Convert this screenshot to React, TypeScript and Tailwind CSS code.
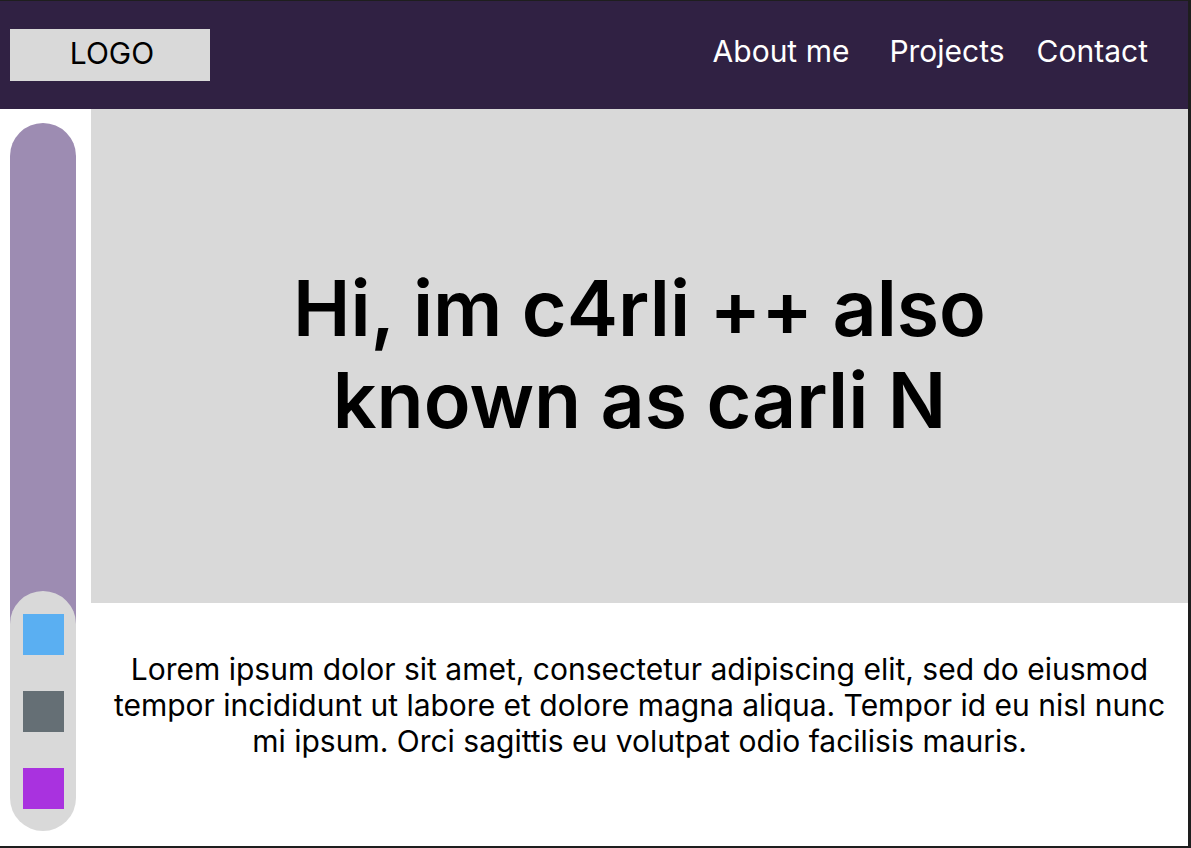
const links = [
  { label: "About me", href: "#about", className: "mr-10" },
  { label: "Projects", href: "#projects", className: "mr-8" },
  { label: "Contact", href: "#contact", className: "" },
];

const swatches = [
  { name: "Blue", className: "bg-[#5aaff2]" },
  { name: "Slate", className: "bg-[#656f75]" },
  { name: "Purple", className: "bg-[#a932df]" },
];

function Header() {
  return (
    <header className="flex h-[108px] items-center justify-between bg-[#302143] pr-10 pl-[10px]">
      <a
        href="#"
        className="flex h-[52px] w-[200px] items-center justify-center bg-[#d9d9d9] pb-1 pl-1 text-black"
      >
        LOGO
      </a>
      <nav className="flex pb-2 text-white">
        {links.map((link) => (
          <a key={link.label} href={link.href} className={link.className}>
            {link.label}
          </a>
        ))}
      </nav>
    </header>
  );
}

function Sidebar() {
  return (
    <aside className="flex w-[91px] shrink-0 flex-col pt-[14px] pr-[15px] pb-[15px] pl-[10px]">
      <div className="-mb-[34px] flex-1 rounded-t-full bg-[#9d8cb2]" />
      <div className="flex h-[240px] flex-col items-center justify-center gap-9 rounded-full bg-[#d9d9d9]">
        {swatches.map((swatch) => (
          <button
            key={swatch.name}
            type="button"
            aria-label={swatch.name}
            className={`size-[41px] ${swatch.className}`}
          />
        ))}
      </div>
    </aside>
  );
}

export default function App() {
  return (
    <div className="flex min-h-screen flex-col border-t border-r-[3px] border-b-2 border-[#1e1e1e] bg-white font-['Inter',sans-serif] text-[30px] leading-9 text-black">
      <Header />
      <div className="flex flex-1">
        <Sidebar />
        <main className="flex flex-1 flex-col text-center">
          <section className="flex flex-1 items-center justify-center bg-[#d9d9d9] px-6 pb-1">
            <h1 className="max-w-[760px] text-[77px] leading-[92px] font-semibold">
              Hi, im c4rli ++ also known as carli N
            </h1>
          </section>
          <section id="about" className="h-[243px] px-4 pt-12">
            <p>
              Lorem ipsum dolor sit amet, consectetur adipiscing elit, sed do
              eiusmod tempor incididunt ut labore et dolore magna aliqua. Tempor
              id eu nisl nunc mi ipsum. Orci sagittis eu volutpat odio facilisis
              mauris.
            </p>
          </section>
        </main>
      </div>
    </div>
  );
}
